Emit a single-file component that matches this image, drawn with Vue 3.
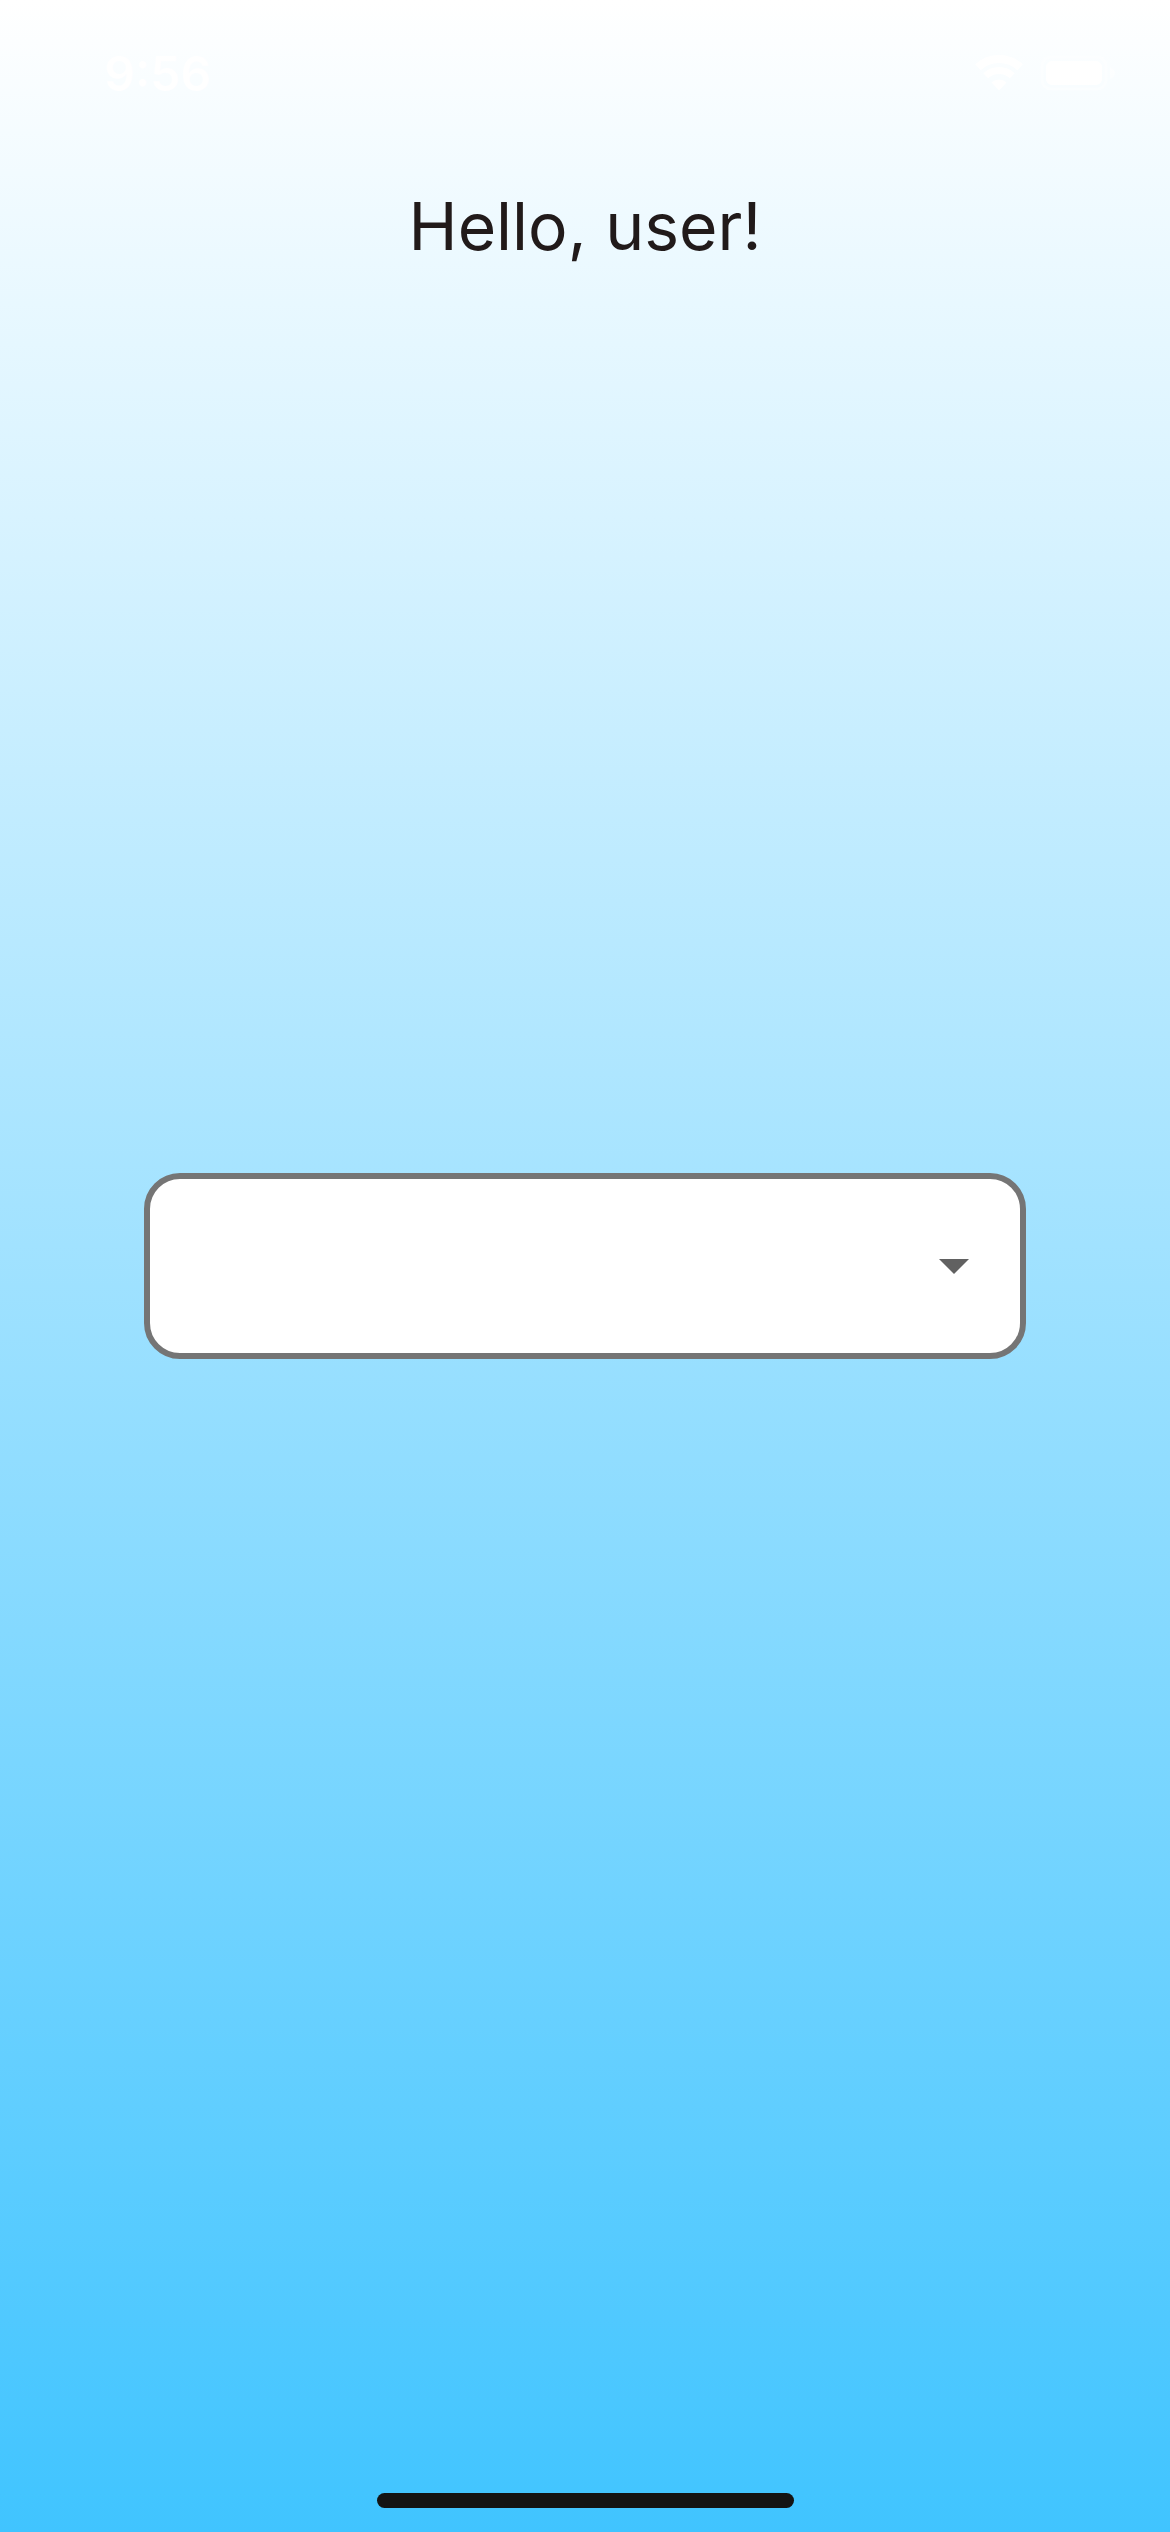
<script setup>
import { ref } from 'vue'

const time = '9:56'
const selected = ref('')
</script>

<template>
  <main class="screen">
    <div class="top">
      <header class="status">
        <span class="time">{{ time }}</span>
        <span class="indicators">
          <svg class="wifi" viewBox="0 0 50 36" aria-hidden="true">
            <path class="wave" stroke-width="8" d="M3.9 12.3A31 31 0 0 1 46.1 12.3" />
            <path class="wave" stroke-width="7" d="M11.7 20.7A19.5 19.5 0 0 1 38.3 20.7" />
            <path d="M17.5 27.5A11 11 0 0 1 32.5 27.5L25 35.5Z" />
          </svg>
          <svg class="battery" viewBox="0 0 76 36" aria-hidden="true">
            <rect class="shell" x="2" y="2" width="64" height="32" rx="9" />
            <rect x="6" y="6" width="56" height="24" rx="6" />
            <path class="nub" d="M70 12 Q75 14 75 18 Q75 22 70 24Z" />
          </svg>
        </span>
      </header>
      <h1 class="greeting">Hello, user!</h1>
    </div>

    <div class="field">
      <select v-model="selected" class="select" aria-label="Choose an option">
        <option value=""></option>
      </select>
      <svg class="arrow" viewBox="0 0 30 15" aria-hidden="true">
        <path d="M0 0H30L15 15Z" />
      </svg>
    </div>

    <footer class="bottom">
      <div class="home-bar"></div>
    </footer>
  </main>
</template>

<style>
body {
  margin: 0;
}
</style>

<style scoped>
.screen {
  box-sizing: border-box;
  min-height: 100vh;
  display: grid;
  grid-template-rows: 1fr auto 1fr;
  background: linear-gradient(#ffffff, #40c4ff);
  font-family: Inter, "Liberation Sans", sans-serif;
}

.status {
  box-sizing: border-box;
  height: 148px;
  padding: 50px 54px 0 104px;
  display: flex;
  justify-content: space-between;
  align-items: flex-start;
  color: #ffffff;
}

.time {
  font-size: 48px;
  line-height: 48px;
  font-weight: 600;
  font-feature-settings: "case";
}

.indicators {
  display: flex;
  gap: 16px;
  padding-top: 5px;
}

.indicators svg {
  display: block;
  fill: #ffffff;
}

.wifi {
  width: 50px;
  height: 36px;
}

.indicators .wave {
  fill: none;
  stroke: #ffffff;
}

.battery {
  width: 76px;
  height: 36px;
}

.battery .shell {
  fill: none;
  stroke: #ffffff;
  stroke-width: 3;
  opacity: 0.4;
}

.battery .nub {
  opacity: 0.5;
}

.greeting {
  margin: 0;
  padding-top: 36px;
  font-size: 66px;
  line-height: 84px;
  font-weight: 400;
  text-align: center;
  color: #211a1a;
}

.field {
  display: grid;
  align-items: center;
  margin: 0 144px;
}

.select,
.arrow {
  grid-area: 1 / 1;
}

.select {
  box-sizing: border-box;
  width: 100%;
  height: 186px;
  padding: 0 120px 0 48px;
  appearance: none;
  border: 6px solid #757575;
  border-radius: 36px;
  background: #ffffff;
  color: #211a1a;
  font-family: inherit;
  font-size: 48px;
}

.arrow {
  justify-self: end;
  width: 30px;
  height: 15px;
  margin-right: 57px;
  fill: #616161;
  pointer-events: none;
}

.bottom {
  display: flex;
  justify-content: center;
  align-items: flex-end;
  padding-bottom: 24px;
}

.home-bar {
  width: 417px;
  height: 15px;
  border-radius: 8px;
  background: #141414;
}
</style>
